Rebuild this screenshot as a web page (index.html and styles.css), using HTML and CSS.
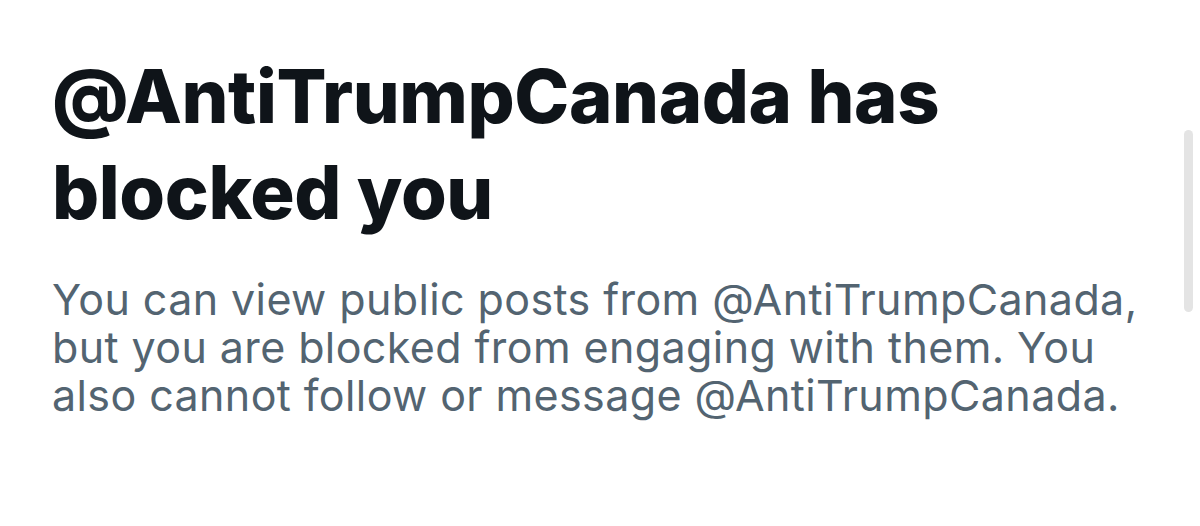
FILE: index.html
```html
<!DOCTYPE html>
<html lang="en">
<head>
<meta charset="utf-8">
<title>Blocked</title>
<link rel="stylesheet" href="styles.css">
</head>
<body>
<main class="page">
  <section class="content">
    <h1 class="title">@AntiTrumpCanada has blocked you</h1>
    <p class="desc">You can view public posts from @AntiTrumpCanada, but you are blocked from engaging with them. You also cannot follow or message @AntiTrumpCanada.</p>
  </section>
  <div class="scrollbar"><div class="thumb"></div></div>
</main>
</body>
</html>
```

FILE: styles.css
```css
html, body {
  margin: 0;
  padding: 0;
  background: #ffffff;
}
.page {
  width: 1200px;
  height: 526px;
  display: flex;
  overflow: hidden;
}
.content {
  flex: 1;
  padding: 48px 0 0 52px;
}
.title {
  margin: 0;
  font-family: Inter, "Noto Sans", sans-serif;
  font-weight: 800;
  font-size: 74px;
  line-height: 96px;
  letter-spacing: -0.4px;
  color: #0f1419;
  width: 1000px;
}
.desc {
  margin: 35px 0 0 0;
  font-family: Inter, "Noto Sans", sans-serif;
  font-weight: 400;
  font-size: 43px;
  line-height: 48px;
  letter-spacing: 0.4px;
  color: #536471;
  width: 1090px;
}
.scrollbar {
  width: 8px;
  padding: 130px 8px 0 0;
}
.thumb {
  width: 9px;
  height: 182px;
  border-radius: 5px;
  background: #e4e4e4;
}
```
